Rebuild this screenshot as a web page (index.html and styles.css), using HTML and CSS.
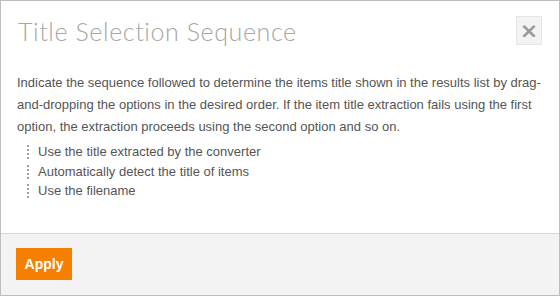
FILE: index.html
```html
<!DOCTYPE html>
<html lang="en">
<head>
    <meta charset="UTF-8">
    <title>Title Selection Sequence</title>
    <link rel="stylesheet" href="styles.css">
</head>
<body>
    <div class="dialog">
        <header class="dialog-header">
            <h1>Title Selection Sequence</h1>
            <button class="close-btn" type="button">&times;</button>
        </header>

        <main class="dialog-body">
            <p>Indicate the sequence followed to determine the items title shown in the results list by drag-and-dropping the options in the desired order. If the item title extraction fails using the first option, the extraction proceeds using the second option and so on.</p>

            <ul class="sort-list">
                <li><span class="handle"></span>Use the title extracted by the converter</li>
                <li><span class="handle"></span>Automatically detect the title of items</li>
                <li><span class="handle"></span>Use the filename</li>
            </ul>
        </main>

        <footer class="dialog-footer">
            <button class="apply-btn" type="button">Apply</button>
        </footer>
    </div>
</body>
</html>
```

FILE: styles.css
```css
* {
    margin: 0;
    padding: 0;
    box-sizing: border-box;
}

body {
    font-family: 'Liberation Sans', Arial, sans-serif;
    background: #fff;
}

.dialog {
    width: 560px;
    height: 296px;
    border: 1px solid #bdbdbd;
    display: flex;
    flex-direction: column;
    background: #fff;
}

.dialog-header {
    display: flex;
    justify-content: space-between;
    align-items: flex-start;
    padding: 15px 17px 0 17px;
    height: 71px;
}

.dialog-header h1 {
    font-family: Lato, 'Open Sans', sans-serif;
    font-weight: 300;
    font-size: 25px;
    color: #a6a6a6;
    line-height: 30px;
    letter-spacing: 0.6px;
}

.close-btn {
    width: 26px;
    height: 29px;
    background: #f3f3f3;
    border: 1px solid #e6e6e6;
    color: #9a9a9a;
    font-family: 'DejaVu Sans', sans-serif;
    font-size: 22px;
    font-weight: bold;
    line-height: 26px;
    cursor: pointer;
}

.dialog-body {
    flex: 1;
    padding: 0 16px;
    color: #555;
    font-size: 13px;
}

.dialog-body p {
    line-height: 22px;
}

.sort-list {
    list-style: none;
    margin-top: 4px;
    padding-left: 10px;
}

.sort-list li {
    display: flex;
    align-items: center;
    line-height: 19.7px;
}

.handle {
    width: 2px;
    height: 14px;
    margin-right: 9px;
    background: repeating-linear-gradient(to bottom, #9e9e9e 0 2px, transparent 2px 4px);
}

.dialog-footer {
    height: 62px;
    border-top: 1px solid #d6d6d6;
    background: #f3f3f3;
    padding: 14px 15px;
}

.apply-btn {
    width: 56px;
    height: 32px;
    background: #f57f00;
    border: none;
    color: #fff;
    font-family: 'Liberation Sans', Arial, sans-serif;
    font-weight: bold;
    font-size: 14px;
    cursor: pointer;
}
```
